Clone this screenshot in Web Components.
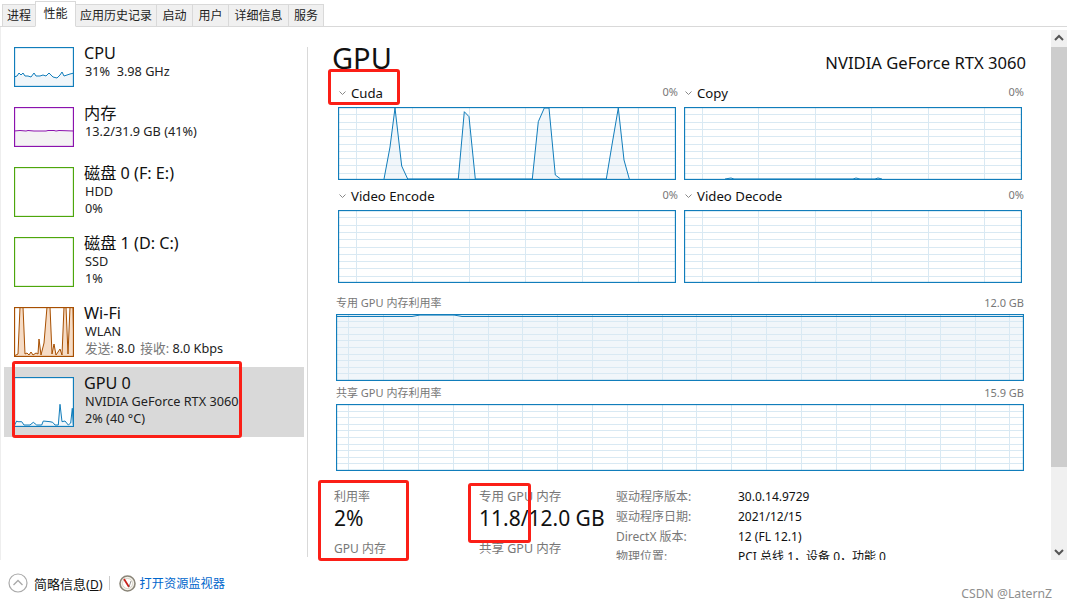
<!DOCTYPE html>
<html>
<head>
<meta charset="utf-8">
<style>
html,body{margin:0;padding:0;background:#fff;}
body{font-family:"Noto Sans","Noto Sans CJK SC",sans-serif;color:#111;width:1067px;height:608px;overflow:hidden;position:relative;}
</style>
</head>
<body>
<task-manager>
  <tm-tab slot="tabs" style="width:34px">进程</tm-tab>
  <tm-tab slot="tabs" selected style="width:41px">性能</tm-tab>
  <tm-tab slot="tabs" style="width:81px">应用历史记录</tm-tab>
  <tm-tab slot="tabs" style="width:36px">启动</tm-tab>
  <tm-tab slot="tabs" style="width:36px">用户</tm-tab>
  <tm-tab slot="tabs" style="width:60px">详细信息</tm-tab>
  <tm-tab slot="tabs" style="width:35px">服务</tm-tab>

  <side-item slot="side" name="CPU">
    <tm-graph slot="chart" w="60" h="40" line="#117dbb" fill="#f1f6fa" pts="0,30 3,29 5,26 7,28 9,26 11,29 14,29 17,30 20,26 22,29 26,29 29,28 32,29 35,26 37,28 39,30 43,31 46,28 48,25 50,29 53,28 56,27 60,26"></tm-graph>
    <div>31%&nbsp; 3.98 GHz</div>
  </side-item>
  <side-item slot="side" name="内存">
    <tm-graph slot="chart" w="60" h="40" line="#8b12ae" fill="#f4f2f4" pts="0,24 6,23.5 12,24 14,23.5 20,24 32,24 34,23.5 40,23.5 42,24 45,23.5 60,24"></tm-graph>
    <div>13.2/31.9 GB (41%)</div>
  </side-item>
  <side-item slot="side" name="磁盘 0 (F: E:)">
    <tm-graph slot="chart" w="60" h="50" line="#4da60c"></tm-graph>
    <div>HDD</div><div>0%</div>
  </side-item>
  <side-item slot="side" name="磁盘 1 (D: C:)">
    <tm-graph slot="chart" w="60" h="50" line="#4da60c"></tm-graph>
    <div>SSD</div><div>1%</div>
  </side-item>
  <side-item slot="side" name="Wi-Fi">
    <tm-graph slot="chart" w="60" h="50" line="#a74f01" fill="#f6dcc6" pts="0,49 4,47 6,0 9,0 11,47 13,46 15,48 17,45 19,48 22,46 24,47 25,32 27,48 30,36 33,0 36,0 38,47 40,37 42,48 46,42 48,48 50,0 52,0 54,47 56,0 59,0 60,48"></tm-graph>
    <div>WLAN</div>
    <div><span style="color:#777">发送:</span> 8.0 <span style="color:#777;margin-left:2px">接收:</span> 8.0 Kbps</div>
  </side-item>
  <side-item slot="side" name="GPU 0" selected>
    <tm-graph slot="chart" w="60" h="50" line="#117dbb" fill="#f1f6fa" pts="0,49 2.7,44 4,44.7 7.7,44.7 10,48 16,48 19.3,45.3 22.7,48 27.7,48 29.3,44 36,44.7 38.7,45.3 41,48 44.3,48 46,27.3 48,44.7 51,44 54.3,48 56.7,46 58.3,31.3 59.3,48"></tm-graph>
    <div>NVIDIA GeForce RTX 3060</div>
    <div>2% (40 °C)</div>
  </side-item>

  <gpu-panel slot="main"></gpu-panel>
</task-manager>

<red-box style="left:328px;top:69px;width:72px;height:36px"></red-box>
<red-box style="left:12px;top:361px;width:230px;height:77px"></red-box>
<red-box style="left:318px;top:480px;width:91px;height:81px"></red-box>
<red-box style="left:468px;top:483px;width:63px;height:60px"></red-box>
<water-mark>CSDN @LaternZ</water-mark>

<script>
// small helper: shadow root from a html string
function shadow(el, html) {
  el.attachShadow({ mode: "open" }).innerHTML = html;
}

class TaskManager extends HTMLElement {
  constructor() {
    super();
    shadow(this, `
<style>
:host{display:flex;flex-direction:column;width:1067px;height:608px;}
.tabs{display:flex;align-items:flex-end;height:27px;padding-left:2px;box-sizing:border-box;border-bottom:1px solid #d9d9d9;}
.body{display:flex;height:533px;border-left:1px solid #eee;box-sizing:border-box;}
.side{width:303px;box-sizing:border-box;padding:10px 0 0 3px;flex:none;}
.rule{width:1px;background:#d9d9d9;margin:20px 0 3px 3px;flex:none;}
.main{flex:1;min-width:0;overflow:hidden;}
.scroll{width:16px;flex:none;margin-top:3px;background:#f0f0f0;display:flex;flex-direction:column;align-items:center;}
.scroll svg{flex:none;}
.thumb{width:16px;height:420px;background:#cdcdcd;margin-top:1px;}
.end{margin-top:auto;}
.foot{flex:1;display:flex;align-items:center;padding:0 0 2px 8px;font-size:13px;}
.less{margin-left:6px;color:#111;}
.less u{font-size:12px;}
.sep{width:1px;height:14px;background:#ccc;margin:0 9px 0 6px;}
.link{margin-left:4px;color:#0066cc;font-size:12.2px;}
</style>
<div class="tabs"><slot name="tabs"></slot></div>
<div class="body">
  <div class="side"><slot name="side"></slot></div>
  <div class="rule"></div>
  <div class="main"><slot name="main"></slot></div>
  <div class="scroll">
    <svg width="16" height="16" viewBox="0 0 16 16"><path d="M4 10l4-4 4 4" fill="none" stroke="#555" stroke-width="2"/></svg>
    <div class="thumb"></div>
    <svg class="end" width="16" height="16" viewBox="0 0 16 16"><path d="M4 6l4 4 4-4" fill="none" stroke="#555" stroke-width="2"/></svg>
  </div>
</div>
<div class="foot">
  <svg width="20" height="20" viewBox="0 0 20 20"><circle cx="10" cy="10" r="9" fill="#fff" stroke="#aaa" stroke-width="1.2"/><path d="M5.5 12l4.500-4.500 4.500 4.500" fill="none" stroke="#aaa" stroke-width="1.3"/></svg>
  <span class="less">简略信息(<u>D</u>)</span>
  <span class="sep"></span>
  <svg width="17" height="17" viewBox="0 0 17 17"><circle cx="8.500" cy="8.500" r="7.500" fill="#f4f1ea" stroke="#8a8578" stroke-width="1.6"/><circle cx="8.500" cy="8.500" r="5" fill="#fff" stroke="#cfcabd" stroke-width=".8"/><path d="M5 4l5 8" stroke="#c8201a" stroke-width="1.800"/><path d="M10 12l2-6" stroke="#777" stroke-width=".8"/></svg>
  <span class="link">打开资源监视器</span>
</div>`);
  }
}

class TmTab extends HTMLElement {
  constructor() {
    super();
    shadow(this, `
<style>
:host{display:flex;align-items:center;justify-content:center;box-sizing:border-box;height:23px;margin-bottom:-1px;padding-bottom:1px;background:#f0f0f0;border:1px solid #d9d9d9;border-left-width:0;font-size:12px;color:#222;white-space:nowrap;}
:host(:first-child){border-left-width:1px;}
:host([selected]){height:26px;background:#fff;border-bottom-color:#fff;border-left-width:1px;margin-left:-1px;padding-bottom:3px;}
</style><slot></slot>`);
  }
}

class SideItem extends HTMLElement {
  constructor() {
    super();
    shadow(this, `
<style>
:host{display:flex;box-sizing:border-box;width:300px;padding:10px 0 10px 10px;gap:10px;align-items:flex-start;}
:host([selected]){background:#d9d9d9;}
.txt{margin-top:-4px;font-size:12.7px;line-height:17px;color:#222;padding-left:1px;white-space:nowrap;}
.name{font-size:16.2px;line-height:20px;color:#111;margin-left:-1px;}
</style>
<slot name="chart"></slot>
<div class="txt"><div class="name">${this.getAttribute("name")}</div><slot></slot></div>`);
  }
}

// line chart with a grid, everything is computed from the attributes
class TmGraph extends HTMLElement {
  connectedCallback() {
    const w = +this.getAttribute("w"), h = +this.getAttribute("h");
    const line = this.getAttribute("line") || "#117dbb";
    const fill = this.getAttribute("fill") || "none";
    const grid = this.getAttribute("grid");
    const hp = +this.getAttribute("hp"), vp = +this.getAttribute("vp"), vo = +this.getAttribute("vo");
    const pts = this.getAttribute("pts");
    let lines = "";
    if (grid) {
      // snapped to whole pixels so the grid stays crisp
      for (let y = hp; y < h - 1; y += hp) lines += `<path d="M0 ${Math.round(y) + .5}H${w}" stroke="${grid}"/>`;
      for (let x = vo; x < w - 1; x += vp) lines += `<path d="M${Math.round(x) + .5} 0V${h}" stroke="${grid}"/>`;
    }
    let data = "";
    if (pts) {
      const first = pts.split(" ")[0].split(",")[0], last = pts.split(" ").pop().split(",")[0];
      data = `<polygon points="${first},${h} ${pts} ${last},${h}" fill="${fill}"/>`;
    }
    let stroke = pts ? `<polyline points="${pts}" fill="none" stroke="${line}" stroke-width="1"/>` : "";
    shadow(this, `
<style>:host{display:block;flex:none;width:${w}px;height:${h}px;background:#fff;}svg{display:block;}</style>
<svg width="${w}" height="${h}" viewBox="0 0 ${w} ${h}">
${data}${lines}${stroke}
<rect x=".5" y=".5" width="${w - 1}" height="${h - 1}" fill="none" stroke="${line}" stroke-width="1.300"/>
</svg>`);
  }
}

class EngineChart extends HTMLElement {
  constructor() {
    super();
    shadow(this, `
<style>
:host{display:block;width:338px;}
.head{display:flex;align-items:flex-start;height:20px;margin-bottom:3px;font-size:13.2px;line-height:18px;color:#111;}
.head svg{margin:7px 5px 0 1px;}
.pct{margin-left:auto;margin-right:-2px;font-size:11px;line-height:16px;color:#777;}
</style>
<div class="head">
  <svg width="7" height="5" viewBox="0 0 7 5"><path d="M.5 .5l3 3 3-3" fill="none" stroke="#888"/></svg>
  <span>${this.getAttribute("name")}</span><span class="pct">0%</span>
</div>
<tm-graph w="338" h="73" grid="#d9e9f3" hp="7.300" vp="56.500" vo="17.500" fill="#f1f6fa" pts="${this.getAttribute("pts") || ""}"></tm-graph>`);
  }
}

class MemoryChart extends HTMLElement {
  constructor() {
    super();
    shadow(this, `
<style>
:host{display:block;width:688px;}
.head{display:flex;justify-content:space-between;align-items:flex-start;height:20px;font-size:11px;line-height:18px;color:#777;}
</style>
<div class="head"><span>${this.getAttribute("name")}</span><span>${this.getAttribute("max")}</span></div>
<tm-graph w="688" h="67" grid="#d9e9f3" hp="6.600" vp="34.800" vo="12.300" fill="#f1f6fa" pts="${this.getAttribute("pts") || ""}"></tm-graph>`);
  }
}

class GpuPanel extends HTMLElement {
  constructor() {
    super();
    shadow(this, `
<style>
:host{display:block;box-sizing:border-box;width:743px;height:533px;padding-left:28px;overflow:hidden;}
.title{display:flex;justify-content:space-between;align-items:flex-end;width:690px;height:57px;box-sizing:border-box;margin-left:-4px;}
.title h1{margin:0 0 7px;font-weight:400;font-size:29px;line-height:38px;color:#111;}
.title span{font-size:16.6px;line-height:22px;color:#111;margin:0 -4px 10px 0;}
.engines{display:grid;grid-template-columns:338px 338px;gap:7px 8px;margin:0 0 0 2px;}
.mem{display:flex;flex-direction:column;gap:3px;margin-top:11px;}
.stats{display:flex;margin-top:18px;}
.col{display:flex;flex-direction:column;font-size:12px;color:#777;line-height:16px;}
.big{font-size:21px;line-height:28px;color:#111;margin:-1px 0 9px;}
.col.a{width:145px;margin-left:-2px;}
.col.b{width:137px;font-size:12.5px;}
.info{display:grid;grid-template-columns:122px auto;grid-auto-rows:20px;font-size:12px;line-height:20px;color:#777;margin-top:-2px;}
.info b{font-weight:400;color:#111;}
</style>
<div class="title"><h1>GPU</h1><span>NVIDIA GeForce RTX 3060</span></div>
<div class="engines">
  <engine-chart name="Cuda" pts="46,72 52,40 57,1 63.700,59 69.700,72 120.300,72 126.300,4.700 131,9.700 137.300,72 194.300,72 200.300,14.700 206.300,1 211,1 217.300,68 222.700,72 268.300,72 274.300,36 280.300,1 286,53 291.300,72"></engine-chart>
  <engine-chart name="Copy" pts="41,72 47,71 50,72 169,72 172,71 176,72 191,72 194,71 198,72"></engine-chart>
  <engine-chart name="Video Encode"></engine-chart>
  <engine-chart name="Video Decode"></engine-chart>
</div>
<div class="mem">
  <memory-chart name="专用 GPU 内存利用率" max="12.0 GB" pts="0,2.500 76,2.500 84,1 118,1 126,2.500 688,2.500"></memory-chart>
  <memory-chart name="共享 GPU 内存利用率" max="15.9 GB"></memory-chart>
</div>
<div class="stats">
  <div class="col a"><span>利用率</span><span class="big">2%</span><span>GPU 内存</span></div>
  <div class="col b"><span>专用 GPU 内存</span><span class="big">11.8/12.0 GB</span><span>共享 GPU 内存</span></div>
  <div class="info">
    <span>驱动程序版本:</span><b>30.0.14.9729</b>
    <span>驱动程序日期:</span><b>2021/12/15</b>
    <span>DirectX 版本:</span><b>12 (FL 12.1)</b>
    <span>物理位置:</span><b>PCI 总线 1，设备 0，功能 0</b>
  </div>
</div>`);
  }
}

class RedBox extends HTMLElement {
  constructor() {
    super();
    shadow(this, `<style>:host{display:block;position:absolute;box-sizing:border-box;border:3px solid #fb1f17;border-radius:3px;}</style>`);
  }
}

class WaterMark extends HTMLElement {
  constructor() {
    super();
    shadow(this, `<style>:host{display:block;position:absolute;right:15px;top:585px;font-size:12.2px;line-height:17px;color:#8e8e8e;}</style><slot></slot>`);
  }
}

customElements.define("tm-graph", TmGraph);
customElements.define("tm-tab", TmTab);
customElements.define("side-item", SideItem);
customElements.define("engine-chart", EngineChart);
customElements.define("memory-chart", MemoryChart);
customElements.define("gpu-panel", GpuPanel);
customElements.define("task-manager", TaskManager);
customElements.define("red-box", RedBox);
customElements.define("water-mark", WaterMark);
</script>
</body>
</html>
